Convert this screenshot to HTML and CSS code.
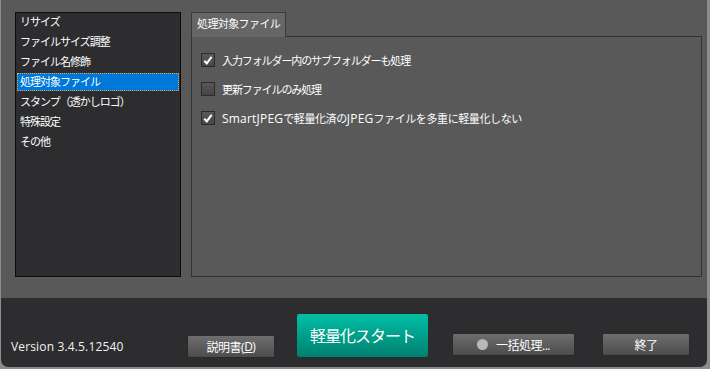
FILE: index.html
```html
<!DOCTYPE html>
<html lang="ja">
<head>
<meta charset="utf-8">
<link rel="stylesheet" href="styles.css">
</head>
<body>
<div class="app">
  <div class="top">
    <ul class="list">
      <li>リサイズ</li>
      <li>ファイルサイズ調整</li>
      <li>ファイル名修飾</li>
      <li class="sel">処理対象ファイル</li>
      <li>スタンプ（透かしロゴ）</li>
      <li>特殊設定</li>
      <li>その他</li>
    </ul>
    <div class="panel">
      <div class="tabs"><div class="tab">処理対象ファイル</div></div>
      <div class="page">
        <label class="cb"><span class="box"><svg viewBox="0 0 13 13" width="13" height="13"><path d="M2.5 6.8 L5.2 9.6 L10.4 2.6" fill="none" stroke="#fff" stroke-width="2.2"/></svg></span>入力フォルダー内のサブフォルダーも処理</label>
        <label class="cb"><span class="box"></span>更新ファイルのみ処理</label>
        <label class="cb kanji"><span class="box"><svg viewBox="0 0 13 13" width="13" height="13"><path d="M2.5 6.8 L5.2 9.6 L10.4 2.6" fill="none" stroke="#fff" stroke-width="2.2"/></svg></span><span class="lat">SmartJPEG</span>で軽量化済の<span class="lat">JPEG</span>ファイルを多重に軽量化しない</label>
      </div>
    </div>
  </div>
  <div class="bottom">
    <div class="version">Version 3.4.5.12540</div>
    <button class="btn manual">説明書(<u>D</u>)</button>
    <button class="start">軽量化スタート</button>
    <button class="btn batch"><span class="dot"></span>一括処理...</button>
    <button class="btn quit">終了</button>
  </div>
</div>
</body>
</html>
```
FILE: styles.css
```css
* { box-sizing: border-box; }
html, body { margin: 0; padding: 0; }
body {
  width: 710px;
  height: 369px;
  background: #8c8c8c;
  font-family: "Open Sans", "Noto Sans CJK JP", sans-serif;
  color: #fff;
  overflow: hidden;
}
.app {
  width: 706px;
  height: 367px;
  margin-left: 1px;
  display: flex;
  flex-direction: column;
  border-radius: 0 0 7px 7px;
  overflow: hidden;
  background: #2d2d2f;
}
.top {
  height: 298px;
  background: #595959;
  display: flex;
  padding: 12px 0 0 14px;
}
.list {
  list-style: none;
  margin: 0;
  padding: 0 1px;
  width: 166px;
  height: 265px;
  background: #2d2d30;
  border: 1px solid #0c0c0c;
}
.list li {
  height: 18px;
  margin-bottom: 2px;
  line-height: 16px;
  padding: 0 2px;
  font-size: 11px;
  letter-spacing: -1px;
  border: 1px solid transparent;
  white-space: nowrap;
}
.list li.sel {
  background: #0078d7;
  border: 1px dotted #e8a23c;
}
.panel {
  margin-left: 10px;
  width: 511px;
  height: 265px;
  display: flex;
  flex-direction: column;
}
.tabs { display: flex; height: 24px; }
.tab {
  width: 95px;
  height: 25px;
  background: #666666;
  border: 1px solid #3a3a3a;
  border-bottom: none;
  font-size: 11px;
  letter-spacing: -0.6px;
  line-height: 22px;
  padding-left: 5px;
  position: relative;
  z-index: 1;
}
.page {
  flex: 1;
  border: 1px solid #333;
  padding: 16px 0 0 9px;
  display: flex;
  flex-direction: column;
  gap: 15px;
}
.cb {
  display: flex;
  align-items: center;
  height: 14px;
  font-size: 11px;
  letter-spacing: -1.1px;
  white-space: nowrap;
}
.cb.kanji { letter-spacing: -0.4px; }
.cb .lat {
  font-size: 12px;
  letter-spacing: 0.2px;
}
.box {
  width: 14px;
  height: 14px;
  border: 1px solid #2b2b2b;
  background: linear-gradient(#585858, #464646);
  margin-right: 7px;
  display: flex;
  align-items: center;
  justify-content: center;
}
.box svg { display: block; }
.bottom {
  flex: 1;
  display: flex;
  align-items: flex-end;
  padding-bottom: 10px;
}
.version {
  width: 186px;
  padding-left: 10px;
  font-family: "Open Sans", sans-serif;
  font-size: 12px;
  margin-bottom: 2px;
  letter-spacing: 0.15px;
  color: #f2f2f2;
}
button {
  font-family: "Open Sans", "Noto Sans CJK JP", sans-serif;
  color: #fff;
  cursor: default;
}
.btn {
  height: 23px;
  border: 1px solid #2a2a2a;
  border-radius: 2px;
  background: linear-gradient(#6e6e6e, #4c4c4c);
  font-size: 12px;
  padding: 0;
  display: flex;
  align-items: center;
  justify-content: center;
  letter-spacing: -0.5px;
}
.manual { width: 88px; margin-bottom: -1px; }
.start {
  width: 131px;
  height: 43px;
  margin-left: 22px;
  border: none;
  border-radius: 2px;
  background: linear-gradient(#00bfa6, #00806f);
  font-size: 16px;
  letter-spacing: -1px;
  padding: 0 0 2px 0;
}
.batch { width: 123px; margin-left: 24px; margin-bottom: 1px; }
.quit { width: 88px; margin-left: 27px; margin-bottom: 1px; }
.dot {
  width: 11px;
  height: 11px;
  border-radius: 50%;
  background: #b8b8b8;
  margin-right: 8px;
}
```
